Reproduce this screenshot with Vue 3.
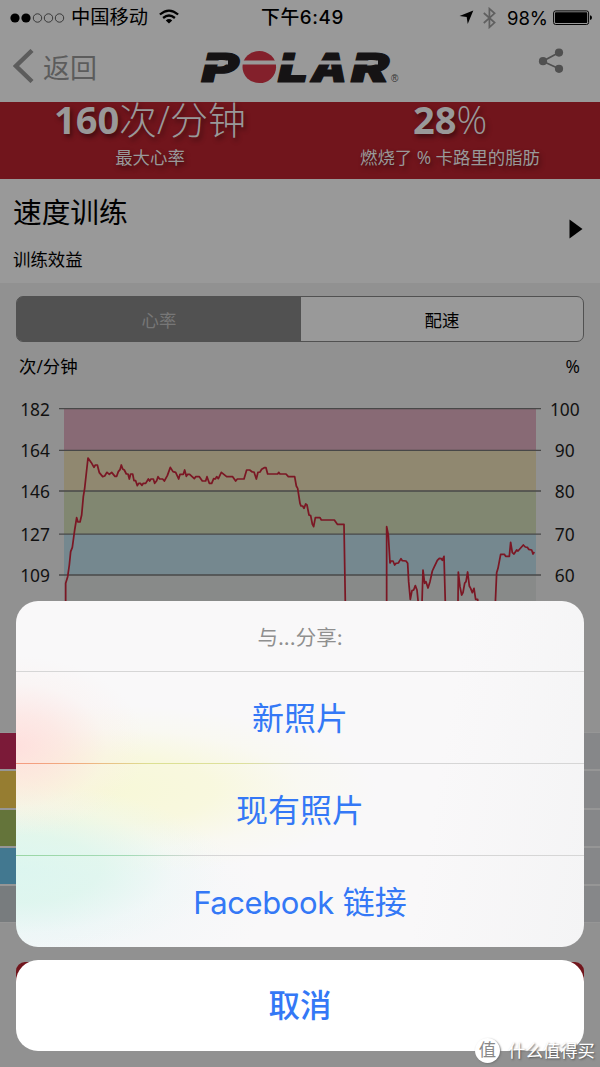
<template>
  <div class="screen">
    <header class="top">
      <div class="status">
        <div class="carrier">
          <svg width="56" height="12" viewBox="0 0 56 12">
            <circle cx="5" cy="6" r="4.6" />
            <circle cx="16" cy="6" r="4.6" />
            <circle v-for="cx in [27.5, 38.5, 49.5]" :key="cx" :cx="cx" cy="6" r="4.2" fill="none" stroke="#222" stroke-width=".8" />
          </svg>
          <span class="operator">中国移动</span>
          <svg class="wifi" width="20" height="15" viewBox="0 0 20 15" fill="none" stroke="#000" stroke-width="2.3">
            <path d="M.9 5.5Q10-2.3 19.1 5.5M4.1 9Q10 4 15.9 9" />
            <path d="M6.8 11.4Q10 8.7 13.2 11.4L10 14.5Z" fill="#000" stroke="none" />
          </svg>
        </div>
        <span class="time">下午6:49</span>
        <div class="power">
          <svg width="15" height="15" viewBox="0 0 15 15"><path d="M14.3.5 8.7 14 7.7 7.1.5 6Z" /></svg>
          <svg class="bluetooth" width="13" height="22" viewBox="0 0 13 22" fill="none" stroke="#5f5f5f" stroke-width="1.7">
            <path d="M.8 6 11.6 15.5 6.4 20.3V1.7L11.6 6.3.8 16" />
          </svg>
          <span class="percent">98%</span>
          <svg width="39" height="16" viewBox="0 0 39 16">
            <rect x=".6" y=".9" width="35" height="13.6" rx="2" fill="none" stroke="#000" />
            <rect x="2" y="2.3" width="32.2" height="10.8" rx=".8" />
            <path d="M37 5.3q2 .5 2 2.4t-2 2.4z" />
          </svg>
        </div>
      </div>
      <nav class="nav">
        <div class="back">
          <svg width="22" height="34" viewBox="0 0 22 34" fill="none" stroke="#5c5c5c" stroke-width="4.4"><path d="M19 1.5 3 17 19 32.5" /></svg>
          <span>返回</span>
        </div>
        <svg class="logo" width="202" height="60" viewBox="198 36 202 60">
          <g class="logo-text">
            <text x="201.5" y="81.5" textLength="37" lengthAdjust="spacingAndGlyphs">P</text>
            <text x="278" y="81.5" textLength="30" lengthAdjust="spacingAndGlyphs">L</text>
            <text x="311" y="81.5" textLength="36" lengthAdjust="spacingAndGlyphs">A</text>
            <text x="351" y="81.5" textLength="38" lengthAdjust="spacingAndGlyphs">R</text>
          </g>
          <ellipse cx="259.3" cy="67" rx="16.8" ry="16.1" fill="#83202b" />
          <path d="M199 60.6H228V64.4H199ZM241 60.6H305V64.4H241ZM318 60.6H378V64.4H318Z" fill="#999" />
          <text class="registered" x="391" y="82">®</text>
        </svg>
        <svg class="share" width="26" height="26" viewBox="0 0 26 26" fill="#505050">
          <path d="M21 4.5 4.8 13.2 21 20.8" fill="none" stroke="#505050" stroke-width="1.7" />
          <circle cx="5" cy="13.2" r="4.1" /><circle cx="21" cy="4.6" r="4.1" /><circle cx="21" cy="20.8" r="4.1" />
        </svg>
      </nav>
    </header>

    <section class="summary">
      <div class="stat">
        <div class="value"><b>160</b>次/分钟</div>
        <div class="caption">最大心率</div>
      </div>
      <div class="stat">
        <div class="value"><b>28</b>%</div>
        <div class="caption">燃烧了 % 卡路里的脂肪</div>
      </div>
    </section>

    <section class="training">
      <div>
        <h1>速度训练</h1>
        <p>训练效益</p>
      </div>
      <svg width="14" height="20" viewBox="0 0 14 20"><path d="M.5.5V19.5L13.5 10Z" /></svg>
    </section>

    <section class="details">
      <div class="tabs">
        <div class="tab active">心率</div>
        <div class="tab">配速</div>
      </div>
      <div class="units"><span>次/分钟</span><span>%</span></div>
      <svg class="chart" width="600" height="240" viewBox="0 390 600 240">
        <rect v-for="band in bands" :key="band.y" x="64" :y="band.y" width="472" :height="band.height" :fill="band.color" />
        <g v-for="tick in ticks" :key="tick.bpm">
          <line x1="59" x2="541" :y1="tick.y" :y2="tick.y" stroke="#484848" stroke-width="1.3" />
          <text x="50" :y="tick.y + 7" text-anchor="end">{{ tick.bpm }}</text>
          <text x="564.8" :y="tick.y + 7" text-anchor="middle">{{ tick.percent }}</text>
        </g>
        <g fill="none" stroke="#7b1724" stroke-width="5.2" stroke-linejoin="round" transform="translate(0 440) scale(.33333)">
          <polyline v-for="(line, i) in heartRate" :key="i" :points="line" />
        </g>
      </svg>
      <div class="zones">
        <div v-for="zone in zones" :key="zone" class="zone">
          <i :style="{ background: zone }"></i>
        </div>
      </div>
      <div class="action"></div>
    </section>

    <div class="sheet">
      <div class="options">
        <div class="sheet-title">与...分享:</div>
        <div class="option first">新照片</div>
        <div class="option second">现有照片</div>
        <div class="option third"><span>Facebook</span> 链接</div>
      </div>
      <div class="cancel">取消</div>
    </div>

    <div class="watermark"><span class="badge">值</span><span>什么值得买</span></div>
  </div>
</template>

<script setup>
const bands = [
  { y: 409, height: 41.5, color: '#886a75' },
  { y: 450.5, height: 40.5, color: '#908870' },
  { y: 491, height: 43, color: '#818771' },
  { y: 534, height: 41, color: '#75888f' },
  { y: 575, height: 55, color: '#888a89' }
]

const ticks = [
  { y: 408.7, bpm: 182, percent: 100 },
  { y: 450.3, bpm: 164, percent: 90 },
  { y: 491, bpm: 146, percent: 80 },
  { y: 534.2, bpm: 127, percent: 70 },
  { y: 575, bpm: 109, percent: 60 }
]

const heartRate = [
  '197,490 197,430 203,410 208,375 212,335 217,322 224,270 230,233 234,246 240,246 245,225 250,170 254,145 264,54 274,68 282,82 286,75 292,75 298,98 308,110 314,108 321,97 328,103 335,97 345,109 350,109 355,95 360,89 364,75 368,87 373,90 379,102 384,102 388,117 392,102 398,102 402,122 407,122 412,137 416,130 421,130 426,136 430,130 437,130 445,117 449,123 453,117 460,117 464,130 470,122 474,110 479,117 488,117 493,123 502,107 511,82 519,95 527,97 536,117 540,103 550,103 554,90 559,109 563,103 569,103 583,116 587,110 598,110 607,123 617,123 621,110 628,130 635,130 641,116 646,117 650,110 655,116 664,97 680,110 698,110 707,123 712,117 732,117 740,90 749,90 757,96 762,96 769,117 774,97 780,96 785,88 793,83 798,83 803,102 833,102 836,97 840,102 858,102 865,110 884,110 889,138 893,145 900,190 903,198 908,198 912,205 917,192 921,195 927,225 932,227 937,252 941,260 946,233 960,233 964,240 1003,240 1012,253 1032,253 1036,490',
  '1160,490 1160,260 1165,285 1170,369 1173,363 1179,363 1184,375 1188,370 1195,369 1203,356 1207,362 1218,363 1223,370 1226,425 1231,478 1236,452 1241,450 1246,437 1251,450 1255,490',
  '1266,490 1269,390 1274,430 1278,425 1284,444 1290,425 1297,393 1302,382 1312,361 1318,355 1324,356 1327,361 1332,349 1336,490',
  '1374,490 1375,396 1380,440 1385,465 1389,458 1394,430 1398,425 1403,396 1408,438 1412,445 1417,458 1422,445 1427,478 1433,478 1434,490',
  '1486,490 1490,398 1494,385 1502,343 1513,343 1517,349 1528,349 1532,307 1537,338 1542,342 1550,330 1554,333 1570,315 1576,321 1582,322 1586,328 1595,330 1599,342 1603,336'
]

const zones = ['#7b1a38', '#967d31', '#64743a', '#427890', '#787c7e']
</script>

<style>
body {
  margin: 0;
}
</style>

<style scoped>
.screen {
  position: relative;
  width: 600px;
  height: 1067px;
  overflow: hidden;
  background: #919191;
  color: #000;
  font-family: "Open Sans", "Noto Sans CJK SC", sans-serif;
}

svg {
  display: block;
  flex: none;
}

.top {
  height: 102px;
  background: #999;
}

.status {
  display: grid;
  grid-template-columns: 1fr auto 1fr;
  align-items: center;
  height: 33px;
  padding: 0 8px 0 10px;
  font-family: Inter, "Noto Sans CJK SC", sans-serif;
}

.carrier,
.power {
  display: flex;
  align-items: center;
}

.operator {
  margin-left: 5px;
  font-size: 19.3px;
  line-height: 35px;
}

.wifi {
  margin: 0 0 2px 11px;
}

.time {
  padding-left: 3px;
  font-size: 18.8px;
  font-weight: 500;
  line-height: 33px;
  letter-spacing: .6px;
}

.power {
  justify-content: flex-end;
}

.bluetooth {
  margin: 0 11px 0 9px;
}

.percent {
  margin-right: 5px;
  font-size: 18.5px;
}

.nav {
  display: flex;
  align-items: center;
  height: 66px;
}

.back {
  display: flex;
  align-items: center;
  width: 185px;
  padding-left: 13px;
  color: #5c5c5c;
  font-size: 27px;
  line-height: 66px;
}

.back span {
  margin: 3px 0 0 8px;
}

.logo {
  overflow: visible;
}

.logo-text {
  font: italic 900 40px Inter, sans-serif;
  fill: #151314;
  stroke: #151314;
  stroke-width: 1.2px;
  stroke-linejoin: round;
}

.registered {
  font: 10px "Liberation Sans", sans-serif;
  fill: #333;
}

.share {
  margin: 0 0 10px 138px;
}

.summary {
  display: grid;
  grid-template-columns: 1fr 1fr;
  height: 77px;
  background: #71151c;
  color: #999;
  text-align: center;
}

.value {
  height: 42px;
  font-size: 38px;
  font-weight: 300;
  line-height: 35px;
  text-shadow: 2px 3px 5px rgba(0, 0, 0, .45);
}

.value b {
  font-weight: 700;
}

.caption {
  font-size: 17.4px;
  line-height: 27px;
  text-shadow: 2px 3px 5px rgba(0, 0, 0, .45);
}

.training {
  display: flex;
  align-items: center;
  justify-content: space-between;
  height: 104px;
  padding: 0 17px 0 13px;
  background: #999;
  box-sizing: border-box;
}

.training h1 {
  margin: 0;
  font-size: 28.7px;
  font-weight: 400;
  line-height: 56px;
}

.training p {
  margin: 0;
  font-size: 17.4px;
  line-height: 38px;
}

.training svg {
  margin-top: -5px;
}

.tabs {
  display: grid;
  grid-template-columns: 284px 1fr;
  height: 46px;
  margin: 13px 16px 0;
  border: 1.4px solid #515151;
  border-radius: 7px;
  box-sizing: border-box;
  background: #999;
  font-size: 17.4px;
  text-align: center;
}

.tab {
  height: 44px;
  line-height: 46px;
}

.tab.active {
  border-radius: 5px 0 0 5px;
  background: #515151;
  color: #777;
}

.units {
  display: flex;
  justify-content: space-between;
  height: 48px;
  padding: 0 20px 0 19px;
  font-size: 17.4px;
  line-height: 48px;
}

.chart text {
  font-family: "Noto Sans", sans-serif;
  font-size: 17.4px;
  fill: #111;
}

.zones {
  display: flex;
  flex-direction: column;
  gap: 2px;
  padding-top: 103px;
}

.zone {
  height: 36.3px;
  background: #868789;
  box-shadow: 0 0 0 1px #969696;
}

.zone i {
  display: block;
  width: 300px;
  height: 100%;
}

.action {
  height: 60px;
  margin: 40px 16px 0;
  border-radius: 9px;
  background: #71151c;
}

.sheet {
  position: absolute;
  right: 16px;
  bottom: 16px;
  left: 16px;
  color: #3478f6;
  font-family: Inter, "Noto Sans CJK SC", sans-serif;
  text-align: center;
}

.options {
  height: 346px;
  overflow: hidden;
  border-radius: 22px;
  background:
    radial-gradient(ellipse 130px 90px at 0 145px, rgba(255, 221, 220, .9) 0%, rgba(254, 225, 222, .65) 35%, rgba(252, 236, 232, .25) 70%, rgba(250, 248, 248, 0) 100%),
    radial-gradient(ellipse 210px 85px at 0 268px, rgba(217, 246, 238, .85) 0%, rgba(219, 246, 236, .75) 40%, rgba(232, 248, 244, .3) 75%, rgba(245, 249, 248, 0) 100%),
    radial-gradient(ellipse 270px 85px at 90px 189px, rgba(247, 248, 214, .95) 0%, rgba(248, 248, 216, .8) 40%, rgba(249, 249, 228, .35) 72%, rgba(249, 249, 245, 0) 100%),
    radial-gradient(ellipse 240px 110px at 10px 300px, #eaf4f7 0%, rgba(240, 246, 248, .6) 50%, rgba(249, 249, 249, 0) 100%),
    linear-gradient(100deg, #f9f8f9 72%, #f4f4f5);
}

.sheet-title {
  height: 70px;
  color: #8f8f8f;
  font-size: 20.5px;
  line-height: 73px;
}

.option {
  height: 92px;
  border-top: 1px solid #d6d6d6;
  box-sizing: border-box;
  font-size: 32px;
  line-height: 93px;
}

.second {
  border-image: linear-gradient(90deg, #f59a80, #f0b080 12%, #dce092 24%, #dde09c 40%, #d6d6d6 50%) 1;
}

.third {
  border-image: linear-gradient(90deg, #99d6a4, #a4dbb6 20%, #d6d6d6 32%) 1;
}

.third span {
  font-size: 31px;
  letter-spacing: -.4px;
}

.cancel {
  height: 91px;
  margin-top: 13px;
  border-radius: 22px;
  background: #fff;
  font-size: 31.5px;
  font-weight: 500;
  line-height: 92px;
}

.watermark {
  position: absolute;
  right: 5px;
  bottom: 4px;
  display: flex;
  align-items: center;
  gap: 8px;
  color: #fff;
  font-size: 17.4px;
  line-height: 26px;
  text-shadow: 1px 1px 2px #555;
}

.badge {
  width: 25px;
  height: 25px;
  border-radius: 50%;
  background: #fff;
  color: #888;
  box-shadow: 1px 1px 2px #777;
  line-height: 23px;
  text-align: center;
  text-shadow: none;
}
</style>
